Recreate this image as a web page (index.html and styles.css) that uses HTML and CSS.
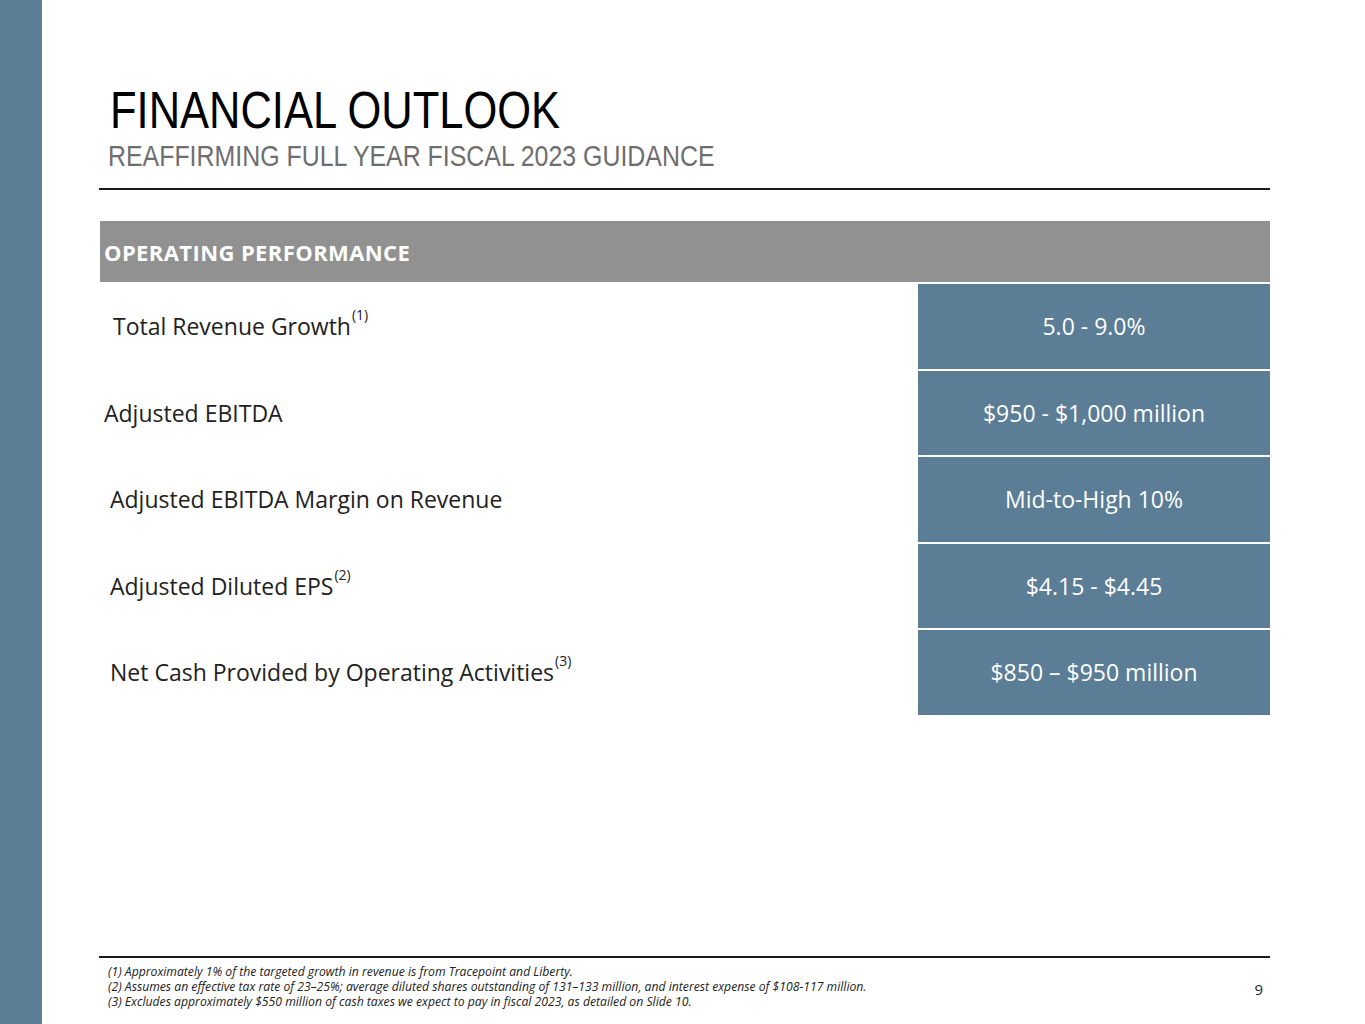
FILE: index.html
```html
<!DOCTYPE html>
<html lang="en">
<head>
<meta charset="utf-8">
<title>Financial Outlook</title>
<link rel="stylesheet" href="styles.css">
</head>
<body>
<div class="slide">
  <aside class="rail"></aside>
  <main class="content">
    <header class="head">
      <h1 class="title"><span class="narrow">FINANCIAL OUTLOOK</span></h1>
      <p class="subtitle"><span class="narrow narrow-sub">REAFFIRMING FULL YEAR FISCAL 2023 GUIDANCE</span></p>
    </header>
    <div class="rule"></div>

    <section class="guidance">
      <div class="guidance-head">OPERATING PERFORMANCE</div>
      <div class="guidance-rows">
        <div class="row">
          <div class="label indent-lg">Total Revenue Growth<sup>(1)</sup></div>
          <div class="value">5.0 - 9.0%</div>
        </div>
        <div class="row">
          <div class="label indent-sm">Adjusted EBITDA</div>
          <div class="value">$950 - $1,000 million</div>
        </div>
        <div class="row">
          <div class="label indent-md">Adjusted EBITDA Margin on Revenue</div>
          <div class="value">Mid-to-High 10%</div>
        </div>
        <div class="row">
          <div class="label indent-md">Adjusted Diluted EPS<sup>(2)</sup></div>
          <div class="value">$4.15 - $4.45</div>
        </div>
        <div class="row">
          <div class="label indent-md">Net Cash Provided by Operating Activities<sup>(3)</sup></div>
          <div class="value">$850 – $950 million</div>
        </div>
      </div>
    </section>

    <footer class="foot">
      <div class="rule"></div>
      <div class="foot-body">
        <ol class="notes">
          <li>(1) Approximately 1% of the targeted growth in revenue is from Tracepoint and Liberty.</li>
          <li>(2) Assumes an effective tax rate of 23–25%; average diluted shares outstanding of 131–133 million, and interest expense of $108-117 million.</li>
          <li>(3) Excludes approximately $550 million of cash taxes we expect to pay in fiscal 2023, as detailed on Slide 10.</li>
        </ol>
        <span class="page-no">9</span>
      </div>
    </footer>
  </main>
</div>
</body>
</html>
```

FILE: styles.css
```css
* { box-sizing: border-box; }

html, body {
  margin: 0;
  padding: 0;
  background: #ffffff;
}

body {
  font-family: "Open Sans", "Lato", sans-serif;
  color: #222222;
}

.slide {
  display: flex;
  width: 1365px;
  height: 1024px;
  overflow: hidden;
}

.rail {
  flex: 0 0 42px;
  background: #5b7d96;
}

.content {
  flex: 1 1 auto;
  display: flex;
  flex-direction: column;
  padding: 84px 95px 0 57px;
}

.head {
  padding-left: 11px;
}

.narrow {
  display: inline-block;
  transform: scaleX(0.836);
  transform-origin: left center;
  white-space: nowrap;
}

.narrow-sub {
  transform: scaleX(0.83);
}

.title {
  margin: 0;
  font-family: "Liberation Sans", Arial, sans-serif;
  font-weight: 400;
  font-size: 52px;
  line-height: 52px;
  color: #000000;
}

.subtitle {
  margin: 5px 0 0 -2px;
  font-family: "Liberation Sans", Arial, sans-serif;
  font-size: 30px;
  line-height: 30px;
  color: #6e6e6e;
}

.rule {
  height: 2px;
  background: #1a1a1a;
}

.head + .rule {
  margin-top: 17px;
}

.guidance {
  margin-top: 31px;
  padding-left: 1px;
}

.guidance-head {
  height: 61px;
  display: flex;
  align-items: center;
  padding: 0 0 0 4px;
  background: #919191;
  color: #ffffff;
  font-weight: 700;
  font-size: 22px;
  letter-spacing: 0.4px;
}

.guidance-rows {
  display: grid;
  grid-auto-rows: 84.5px;
  row-gap: 2px;
  margin-top: 2px;
}

.row {
  display: grid;
  grid-template-columns: 1fr 352px;
}

.label {
  display: flex;
  align-items: center;
  font-size: 23px;
  color: #222222;
}

.label sup {
  font-size: 14px;
  line-height: 1;
  align-self: flex-start;
  margin-top: 24px;
  margin-left: 1px;
}

.indent-sm { padding-left: 4px; }
.indent-md { padding-left: 10px; }
.indent-lg { padding-left: 13px; }

.value {
  display: flex;
  align-items: center;
  justify-content: center;
  background: #5b7d96;
  color: #ffffff;
  font-size: 23px;
}

.foot {
  margin-top: auto;
  padding-bottom: 15px;
}

.foot-body {
  display: flex;
  justify-content: space-between;
  align-items: flex-start;
  padding: 6px 7px 0 9px;
}

.notes {
  list-style: none;
  margin: 0;
  padding: 0;
  font-style: italic;
  font-size: 12.2px;
  line-height: 15px;
  color: #222222;
}

.page-no {
  font-size: 15px;
  line-height: 15px;
  margin-top: 18px;
  color: #222222;
}
```
